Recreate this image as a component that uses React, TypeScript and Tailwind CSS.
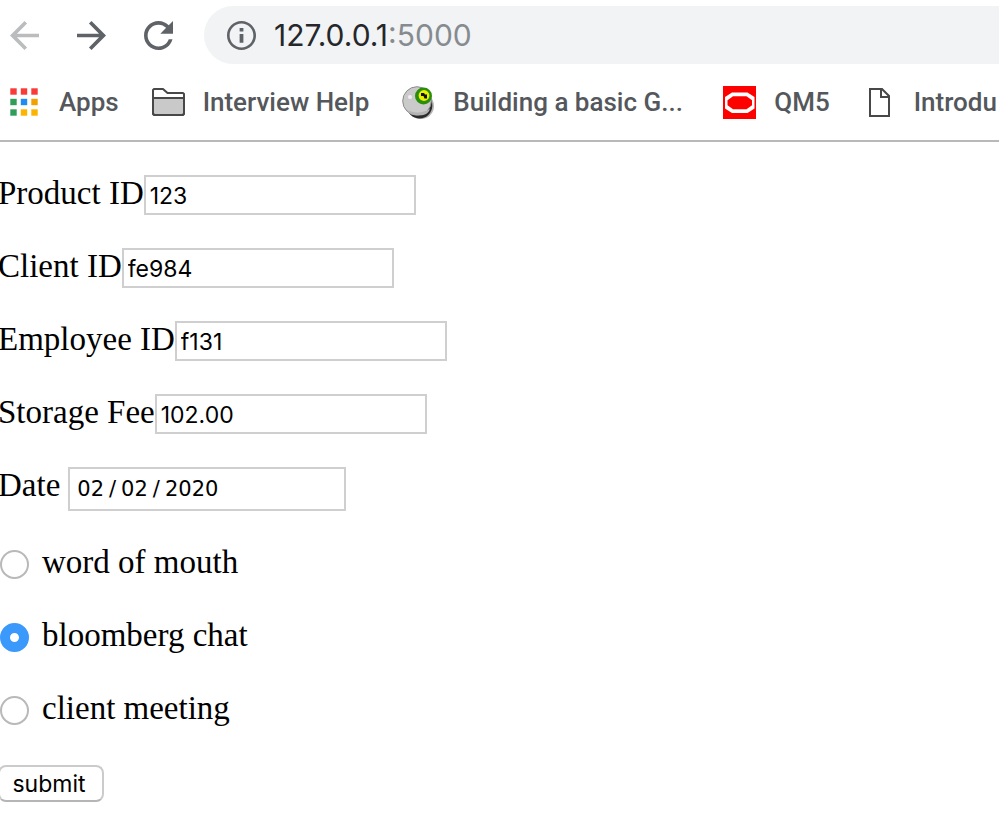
import type { ReactNode } from "react";

function ToolbarIcon({ label, color, d }: { label: string; color: string; d: string }) {
  return (
    <button type="button" aria-label={label} className={`shrink-0 ${color}`}>
      <svg viewBox="4 4 16 16" className="block size-[29px]" fill="currentColor">
        <path d={d} />
      </svg>
    </button>
  );
}

function AppsIcon() {
  const colors = ["#f93a37", "#f93a37", "#f93a37", "#2f9e58", "#1f8cf5", "#f2a100", "#2f9e58", "#fdb400", "#fdb400"];
  return (
    <svg viewBox="0 0 33 33" className="size-[33px]">
      {colors.map((fill, i) => (
        <rect key={i} x={2.3 + (i % 3) * 10.5} y={2.3 + Math.floor(i / 3) * 10.5} width="6.4" height="6.4" fill={fill} />
      ))}
    </svg>
  );
}

function FolderIcon() {
  return (
    <svg viewBox="0 0 33 33" className="size-[33px]" stroke="#484848" strokeWidth="2" strokeLinejoin="round">
      <path d="M1 28V4l1-1h9l4.500 4H31l1 1v20l-1 1H2z" fill="#fff" />
      <path d="M1 12h31v15.500l-1.500 1.500h-28L1 27.500z" fill="#c9c9c9" />
    </svg>
  );
}

function EyeballIcon() {
  return (
    <svg viewBox="0 0 33 33" className="size-[33px]">
      <ellipse cx="19" cy="20" rx="13" ry="13" fill="#b5b5b5" />
      <ellipse cx="17.500" cy="19.500" rx="12.800" ry="13" fill="#2b2b2b" />
      <circle cx="15" cy="15" r="14.300" fill="#cacaca" stroke="#8a8a8a" strokeWidth="1" />
      <path d="M4 23c5 4 16 5 24 0-2 6-8 7-13 6-5 0-9-2-11-6z" fill="#b4b4b4" />
      <circle cx="8" cy="11" r="2" fill="#efefef" />
      <circle cx="21.500" cy="10" r="8.500" fill="#2a8d0b" />
      <circle cx="22" cy="9.500" r="5.400" fill="#e9f000" />
      <path d="M19 7h3l1 1.500h2v4h-2.500l-1-2.500H19z" fill="#111" />
    </svg>
  );
}

function OracleIcon() {
  return (
    <svg viewBox="0 0 33 33" className="size-[33px]">
      <rect width="33" height="33" fill="#f00" />
      <path d="M9 6.500h15.500l7 4.500v11.500l-7 4.500H9l-7-4.500V11z" fill="#fff" />
      <path d="M10 10.200h13.500l5.500 4v5.100l-5.500 4H10l-5.500-4v-5.100z" fill="#f00" />
    </svg>
  );
}

function PageIcon() {
  return (
    <svg viewBox="0 0 33 33" className="size-[33px]" fill="none" stroke="#484848" strokeWidth="2">
      <path d="M7 3h12l7 7v20H7z" fill="#fff" />
      <path d="M18 3v8h8" />
    </svg>
  );
}

function Bookmark({ icon, children }: { icon: ReactNode; children: ReactNode }) {
  return (
    <a href="#" className="flex shrink-0 items-center gap-[18px]">
      {icon}
      <span className="whitespace-nowrap">{children}</span>
    </a>
  );
}

function TextField({ id, label, value }: { id: string; label: string; value: string }) {
  return (
    <div className="flex items-start">
      <label htmlFor={id}>{label}</label>
      <input
        id={id}
        type="text"
        defaultValue={value}
        className="h-10 w-[272px] border-2 border-[#cfcfcf] bg-white px-1 pt-0.5 font-['Inter',sans-serif] text-[23px]"
      />
    </div>
  );
}

function Choice({ id, label, checked }: { id: string; label: string; checked?: boolean }) {
  return (
    <div className="flex h-10 items-start gap-[13px] pl-0.5">
      <input
        id={id}
        type="radio"
        name="source"
        defaultChecked={checked}
        className="mt-[6px] size-[29px] shrink-0 appearance-none rounded-full border-2 border-[#b9b9b9] bg-white checked:border-[10px] checked:border-[#3b99fc]"
      />
      <label htmlFor={id}>{label}</label>
    </div>
  );
}

export default function App() {
  return (
    <div className="min-h-screen overflow-x-hidden bg-white">
      <header className="overflow-hidden border-b-2 border-[#b9b9b9] pt-1.5">
        <div className="flex items-center gap-[38px] pl-2.5">
          <ToolbarIcon label="Back" color="text-[#babcbe]" d="M20 11H7.830l5.590-5.590L12 4l-8 8 8 8 1.410-1.410L7.830 13H20v-2z" />
          <ToolbarIcon label="Forward" color="text-[#5f6368]" d="M12 4l-1.410 1.410L16.170 11H4v2h12.170l-5.580 5.590L12 20l8-8z" />
          <ToolbarIcon
            label="Reload"
            color="text-[#5f6368]"
            d="M17.650 6.350C16.200 4.900 14.210 4 12 4c-4.420 0-7.990 3.580-7.990 8s3.570 8 7.990 8c3.730 0 6.840-2.550 7.730-6h-2.080c-.820 2.330-3.040 4-5.650 4-3.310 0-6-2.690-6-6s2.690-6 6-6c1.660 0 3.140.690 4.220 1.780L13 11h7V4l-2.350 2.350z"
          />
          <div className="-ml-[7px] flex h-[58px] flex-1 items-center gap-[18px] rounded-l-full bg-[#f1f3f4] pl-[23px]">
            <svg viewBox="2 2 20 20" className="size-[29px] shrink-0" fill="#5f6368">
              <path d="M10.700 17h2.600v-6h-2.600v6zm1.300-15C6.480 2 2 6.480 2 12s4.480 10 10 10 10-4.480 10-10S17.520 2 12 2zm0 18.200c-4.520 0-8.200-3.680-8.200-8.200S7.480 3.800 12 3.800s8.200 3.680 8.200 8.200-3.680 8.200-8.200 8.200zM10.700 9.200h2.600V6.800h-2.600v2.400z" />
            </svg>
            <div className="font-['Inter',sans-serif] text-[30px] text-[#25272a]">
              127.0.0.1<span className="text-[#868b90]">:5000</span>
            </div>
          </div>
        </div>
        <nav className="flex h-[76px] items-center gap-[33px] pl-2 font-['Roboto',sans-serif] text-[26px] font-medium text-[#54575b]">
          <Bookmark icon={<AppsIcon />}>Apps</Bookmark>
          <Bookmark icon={<FolderIcon />}>Interview Help</Bookmark>
          <Bookmark icon={<EyeballIcon />}>
            <span className="block min-w-[237px]">Building a basic G...</span>
          </Bookmark>
          <Bookmark icon={<OracleIcon />}>QM5</Bookmark>
          <Bookmark icon={<PageIcon />}>Introdu</Bookmark>
        </nav>
      </header>
      <form
        className="-ml-0.5 flex flex-col gap-[33px] pt-[33px] font-['Liberation_Serif',serif] text-[33px] leading-9 text-black"
        onSubmit={(e) => e.preventDefault()}
      >
        <TextField id="product" label="Product ID" value="123" />
        <TextField id="client" label="Client ID" value="fe984" />
        <TextField id="employee" label="Employee ID" value="f131" />
        <TextField id="fee" label="Storage Fee" value="102.00" />
        <div className="flex items-start gap-2">
          <label htmlFor="date">Date</label>
          <input
            id="date"
            type="date"
            defaultValue="2020-02-02"
            className="h-11 w-[278px] border-2 border-[#cfcfcf] bg-white px-1.5 font-['DejaVu_Sans',sans-serif] text-[21px] [&::-webkit-calendar-picker-indicator]:hidden [&::-webkit-datetime-edit-text]:px-1"
          />
        </div>
        <Choice id="word" label="word of mouth" />
        <Choice id="chat" label="bloomberg chat" checked />
        <Choice id="meeting" label="client meeting" />
        <button
          type="submit"
          className="mt-0.5 h-[37px] w-[106px] rounded-lg border-2 border-[#cbcbcb] border-b-[#b5b5b5] bg-white pr-1 font-['Inter',sans-serif] text-[23px] leading-8"
        >
          submit
        </button>
      </form>
    </div>
  );
}
